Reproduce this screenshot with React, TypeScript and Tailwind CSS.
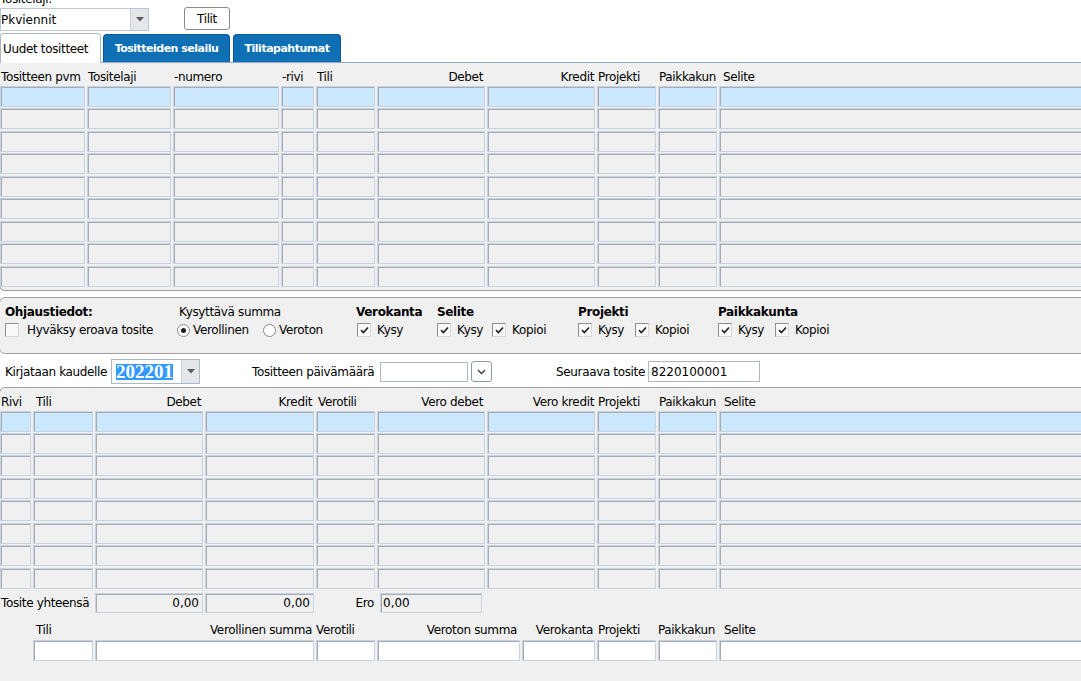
import React from "react";

const g1 = "grid grid-cols-[85px_84px_106px_33px_59px_108px_108px_59px_59px_1fr] gap-x-[2px]";
const g2 = "grid grid-cols-[31px_60px_108px_109px_59px_108px_108px_59px_59px_1fr] gap-x-[2px]";
const g3 = "grid grid-cols-[31px_60px_219px_59px_143px_73px_59px_59px_1fr] gap-x-[2px]";

function Cell({ tone = "gray", children, className = "" }: { tone?: "gray" | "blue" | "white"; children?: React.ReactNode; className?: string }) {
  const bg = tone === "blue" ? "bg-[#cce8ff]" : tone === "white" ? "bg-white" : "bg-[#f0f0f0]";
  return (
    <div className={`${bg} border border-[#c5d3e3] shadow-[inset_1px_1px_0_#a6abb1] flex items-center ${className}`}>
      {children}
    </div>
  );
}

function Check({ on }: { on?: boolean }) {
  return (
    <span className="w-[14px] h-[14px] shrink-0 flex items-center justify-center bg-[#fafafa] border border-t-[#8e8e8e] border-l-[#8e8e8e] border-r-[#d8d8d8] border-b-[#d8d8d8]">
      {on && (
        <svg width="9" height="8" viewBox="0 0 9 8">
          <path d="M1 4.2 L3.4 6.5 L8 1.5" fill="none" stroke="#1e1e1e" strokeWidth="1.6" />
        </svg>
      )}
    </span>
  );
}

function Radio({ on }: { on?: boolean }) {
  return (
    <span className="w-[13px] h-[13px] shrink-0 rounded-full border border-[#8a8a8a] bg-white flex items-center justify-center">
      {on && <span className="w-[5px] h-[5px] rounded-full bg-[#1e1e1e]" />}
    </span>
  );
}

function Caret() {
  return (
    <svg width="8" height="5" viewBox="0 0 8 5">
      <path d="M0 0 H8 L4 4.5 Z" fill="#5c5c5c" />
    </svg>
  );
}

function Rows({ grid, count }: { grid: string; count: number }) {
  return (
    <div className="flex flex-col gap-y-[1.45px]">
      {Array.from({ length: count }).map((_, r) => (
        <div key={r} className={`${grid} h-[21px]`}>
          {Array.from({ length: 10 }).map((_, c) => (
            <Cell key={c} tone={r === 0 ? "blue" : "gray"} />
          ))}
        </div>
      ))}
    </div>
  );
}

function Pair({ label, className = "" }: { label: string; className?: string }) {
  return (
    <div className={`flex items-center ${className}`}>
      <Check on />
      <span className="ml-[6px]">{label}</span>
    </div>
  );
}

export default function App() {
  return (
    <div className="w-[1081px] h-[681px] overflow-hidden bg-white font-['DejaVu_Sans',sans-serif] text-[12px] leading-[16px] tracking-[-0.35px] text-black">
      <div className="w-[1092px]">
        {/* top selector */}
        <div className="h-[8px] overflow-hidden">
          <div className="-mt-[9px]">Tositelaji:</div>
        </div>
        <div className="flex items-start h-[23px]">
          <div className="w-[149px] h-[23px] flex border border-[#b8c8da] bg-white">
            <div className="flex-1 flex items-center tracking-normal">Pkviennit</div>
            <div className="w-[18px] bg-[#e4e6e9] border-l border-[#c8d2de] flex items-center justify-center">
              <Caret />
            </div>
          </div>
          <button className="ml-[35px] -mt-px w-[46px] h-[23px] rounded-[3px] border border-[#8a8a8a] bg-white flex items-center justify-center">
            Tilit
          </button>
        </div>

        {/* tabs */}
        <div className="mt-[2px] h-[30px] flex items-end border-b border-[#93a8c0]">
          <div className="w-[101px] h-[30px] -mb-px bg-white border border-b-0 border-[#aab8c6] rounded-t-[4px] flex items-center pl-[2px]">
            Uudet tositteet
          </div>
          <div className="ml-[2px] w-[127px] h-[28px] bg-[#0f6fb4] border border-b-0 border-[#0b5a94] rounded-t-[4px] flex items-center justify-center text-white font-bold text-[11px] tracking-[-0.5px]">
            Tositteiden selailu
          </div>
          <div className="ml-[3px] w-[108px] h-[28px] bg-[#0f6fb4] border border-b-0 border-[#0b5a94] rounded-t-[4px] flex items-center justify-center text-white font-bold text-[11px] tracking-[-0.5px]">
            Tilitapahtumat
          </div>
        </div>

        {/* panel 1: entries */}
        <div className="-ml-px bg-[#f0f0f0] border-x border-b border-[#a0a0a0] rounded-b-[6px] pb-[3px]">
          <div className={`${g1} h-[23px] items-end pb-px`}>
            <span className="pl-px">Tositteen pvm</span>
            <span className="pl-px">Tositelaji</span>
            <span className="pl-px">-numero</span>
            <span className="pl-px">-rivi</span>
            <span className="pl-px">Tili</span>
            <span className="text-right pr-[2px]">Debet</span>
            <span className="text-right pr-px">Kredit</span>
            <span className="pl-px">Projekti</span>
            <span className="pl-px">Paikkakun</span>
            <span className="pl-[4px]">Selite</span>
          </div>
          <Rows grid={g1} count={9} />
        </div>

        <div className="h-[6px]" />

        {/* panel 2: control data */}
        <div className="-ml-px h-[57px] bg-[#f0f0f0] border border-[#a0a0a0] rounded-[6px]">
          <div className="grid grid-cols-[172px_179px_80px_142px_140px_1fr] pl-[5px] pt-[6px]">
            <div>
              <div className="font-bold">Ohjaustiedot:</div>
              <div className="mt-[3px] flex items-center h-[15px]">
                <Check />
                <span className="ml-[8px]">Hyväksy eroava tosite</span>
              </div>
            </div>
            <div>
              <div className="pl-[2px]">Kysyttävä summa</div>
              <div className="mt-[3px] flex items-center h-[15px]">
                <div className="w-[86px] flex items-center">
                  <Radio on />
                  <span className="ml-[3px]">Verollinen</span>
                </div>
                <Radio />
                <span className="ml-[3px]">Veroton</span>
              </div>
            </div>
            <div>
              <div className="font-bold">Verokanta</div>
              <div className="mt-[3px] flex items-center h-[15px] pl-px">
                <Pair label="Kysy" />
              </div>
            </div>
            <div>
              <div className="font-bold pl-px">Selite</div>
              <div className="mt-[3px] flex items-center h-[15px] pl-px">
                <Pair label="Kysy" className="w-[55px]" />
                <Pair label="Kopioi" />
              </div>
            </div>
            <div>
              <div className="font-bold">Projekti</div>
              <div className="mt-[3px] flex items-center h-[15px]">
                <Pair label="Kysy" className="w-[57px]" />
                <Pair label="Kopioi" />
              </div>
            </div>
            <div>
              <div className="font-bold">Paikkakunta</div>
              <div className="mt-[3px] flex items-center h-[15px]">
                <Pair label="Kysy" className="w-[57px]" />
                <Pair label="Kopioi" />
              </div>
            </div>
          </div>
        </div>

        {/* period row */}
        <div className="h-[33px] flex items-center pl-[5px] pt-[3px]">
          <span className="w-[106px]">Kirjataan kaudelle</span>
          <div className="w-[89px] h-[25px] flex border border-[#a9b9cc] bg-white">
            <div className="flex-1 flex items-center pl-[4px]">
              <span className="bg-[#3399ff] text-white font-bold font-['Liberation_Serif',serif] text-[19px] leading-[16px] h-[16px] tracking-normal">
                202201
              </span>
            </div>
            <div className="w-[18px] bg-[#e4e6e9] border-l border-[#c8d2de] flex items-center justify-center">
              <Caret />
            </div>
          </div>
          <span className="ml-[52px] w-[128px]">Tositteen päivämäärä</span>
          <div className="w-[88px] h-[20px] border border-[#abb9c9] bg-white" />
          <div className="ml-[3px] w-[21px] h-[21px] rounded-[3px] border border-[#8b9aab] bg-white flex items-center justify-center">
            <svg width="9" height="6" viewBox="0 0 9 6">
              <path d="M1 1 L4.5 4.5 L8 1" fill="none" stroke="#444" strokeWidth="1.5" />
            </svg>
          </div>
          <span className="ml-[64px] w-[92px]">Seuraava tosite</span>
          <div className="w-[112px] h-[21px] border border-[#abb9c9] bg-white flex items-center pl-[2px] tracking-normal">
            8220100001
          </div>
        </div>

        {/* panel 3: rows */}
        <div className="-ml-px h-[300px] bg-[#f0f0f0] border-x border-t border-[#a0a0a0] rounded-t-[6px]">
          <div className={`${g2} h-[23px] items-end pb-px`}>
            <span className="pl-px">Rivi</span>
            <span className="pl-[3px]">Tili</span>
            <span className="text-right pr-[2px]">Debet</span>
            <span className="text-right pr-[2px]">Kredit</span>
            <span className="pl-[2px]">Verotili</span>
            <span className="text-right pr-[2px]">Vero debet</span>
            <span className="text-right pr-px">Vero kredit</span>
            <span className="pl-px">Projekti</span>
            <span className="pl-px">Paikkakun</span>
            <span className="pl-[5px]">Selite</span>
          </div>
          <Rows grid={g2} count={8} />

          <div className={`${g2} mt-[4px] h-[20px]`}>
            <span className="col-span-2 pl-px flex items-center">Tosite yhteensä</span>
            <Cell className="justify-end pr-[3px] tracking-normal">0,00</Cell>
            <Cell className="justify-end pr-[3px] tracking-normal">0,00</Cell>
            <span className="text-right flex items-center justify-end pr-px">Ero</span>
            <div className="flex">
              <Cell className="ml-[3px] w-[102px] pl-[2px] tracking-normal">0,00</Cell>
            </div>
          </div>

          <div className={`${g3} mt-[9px] h-[16px]`}>
            <span />
            <span className="pl-[3px]">Tili</span>
            <span className="text-right pr-[2px]">Verollinen summa</span>
            <span>Verotili</span>
            <span className="text-right pr-[3px]">Veroton summa</span>
            <span className="text-right pr-[2px]">Verokanta</span>
            <span className="pl-px">Projekti</span>
            <span>Paikkakun</span>
            <span className="pl-[5px]">Selite</span>
          </div>
          <div className={`${g3} mt-[2px] h-[21px]`}>
            <span />
            {Array.from({ length: 8 }).map((_, i) => (
              <Cell key={i} tone="white" />
            ))}
          </div>
        </div>
      </div>
    </div>
  );
}
